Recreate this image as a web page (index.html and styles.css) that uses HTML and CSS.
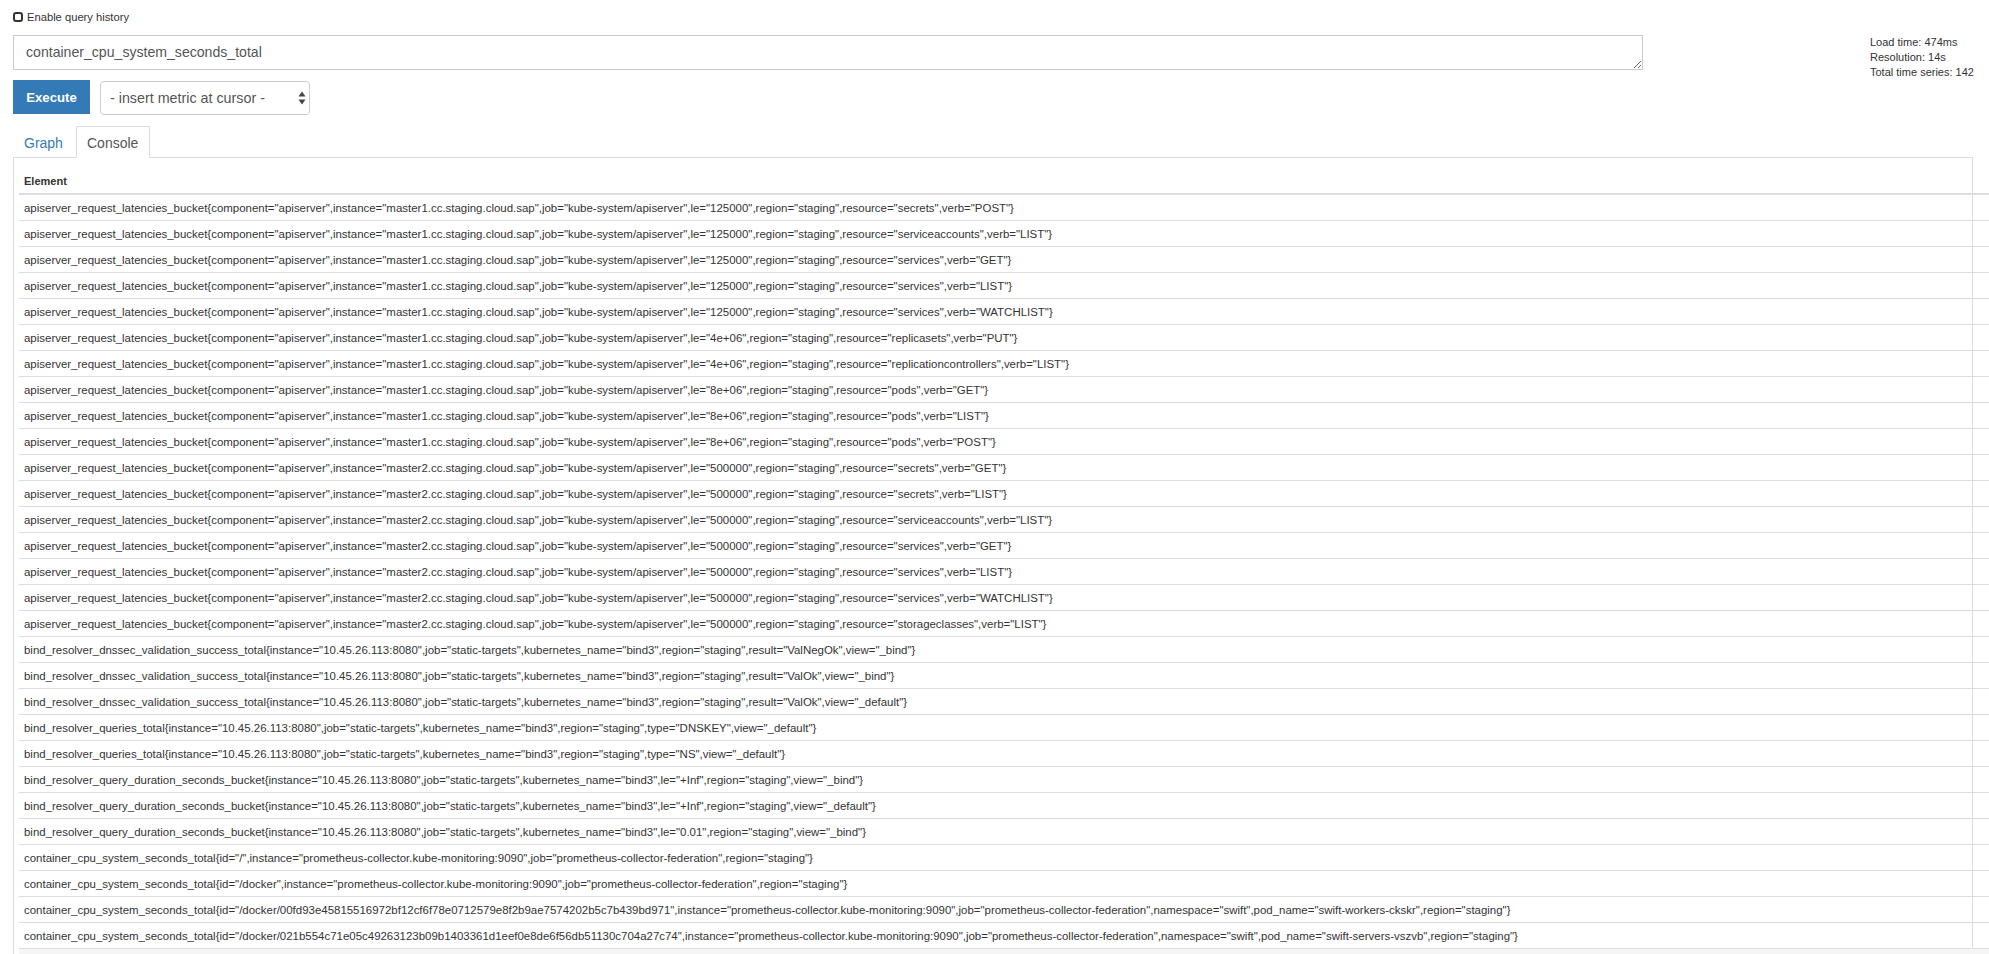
FILE: index.html
```html
<!DOCTYPE html>
<html lang="en">
<head>
<meta charset="utf-8">
<title>Prometheus Time Series Collection and Processing Server</title>
<link rel="stylesheet" href="styles.css">
</head>
<body>
<div class="page">
  <label class="history"><input type="checkbox" class="check"><span>Enable query history</span></label>
  <div class="query-row">
    <textarea class="expr" rows="1" spellcheck="false">container_cpu_system_seconds_total</textarea>
    <div class="stats">
      <div>Load time: 474ms</div>
      <div>Resolution: 14s</div>
      <div>Total time series: 142</div>
    </div>
  </div>
  <div class="actions">
    <button class="execute" type="button">Execute</button>
    <div class="metric-select">
      <span>- insert metric at cursor -</span>
      <svg class="updown" width="8" height="14" viewBox="0 0 8 14"><path d="M4 0.5 L7.5 5.5 H0.5 Z M4 13.5 L0.5 8.5 H7.5 Z" fill="#444"/></svg>
    </div>
  </div>
  <ul class="tabs">
    <li><a class="tab" href="#">Graph</a></li>
    <li><a class="tab active" href="#">Console</a></li>
  </ul>
  <div class="tab-content">
    <table class="console">
      <thead><tr><th>Element</th></tr></thead>
      <tbody>
        <tr><td>apiserver_request_latencies_bucket{component="apiserver",instance="master1.cc.staging.cloud.sap",job="kube-system/apiserver",le="125000",region="staging",resource="secrets",verb="POST"}</td></tr>
        <tr><td>apiserver_request_latencies_bucket{component="apiserver",instance="master1.cc.staging.cloud.sap",job="kube-system/apiserver",le="125000",region="staging",resource="serviceaccounts",verb="LIST"}</td></tr>
        <tr><td>apiserver_request_latencies_bucket{component="apiserver",instance="master1.cc.staging.cloud.sap",job="kube-system/apiserver",le="125000",region="staging",resource="services",verb="GET"}</td></tr>
        <tr><td>apiserver_request_latencies_bucket{component="apiserver",instance="master1.cc.staging.cloud.sap",job="kube-system/apiserver",le="125000",region="staging",resource="services",verb="LIST"}</td></tr>
        <tr><td>apiserver_request_latencies_bucket{component="apiserver",instance="master1.cc.staging.cloud.sap",job="kube-system/apiserver",le="125000",region="staging",resource="services",verb="WATCHLIST"}</td></tr>
        <tr><td>apiserver_request_latencies_bucket{component="apiserver",instance="master1.cc.staging.cloud.sap",job="kube-system/apiserver",le="4e+06",region="staging",resource="replicasets",verb="PUT"}</td></tr>
        <tr><td>apiserver_request_latencies_bucket{component="apiserver",instance="master1.cc.staging.cloud.sap",job="kube-system/apiserver",le="4e+06",region="staging",resource="replicationcontrollers",verb="LIST"}</td></tr>
        <tr><td>apiserver_request_latencies_bucket{component="apiserver",instance="master1.cc.staging.cloud.sap",job="kube-system/apiserver",le="8e+06",region="staging",resource="pods",verb="GET"}</td></tr>
        <tr><td>apiserver_request_latencies_bucket{component="apiserver",instance="master1.cc.staging.cloud.sap",job="kube-system/apiserver",le="8e+06",region="staging",resource="pods",verb="LIST"}</td></tr>
        <tr><td>apiserver_request_latencies_bucket{component="apiserver",instance="master1.cc.staging.cloud.sap",job="kube-system/apiserver",le="8e+06",region="staging",resource="pods",verb="POST"}</td></tr>
        <tr><td>apiserver_request_latencies_bucket{component="apiserver",instance="master2.cc.staging.cloud.sap",job="kube-system/apiserver",le="500000",region="staging",resource="secrets",verb="GET"}</td></tr>
        <tr><td>apiserver_request_latencies_bucket{component="apiserver",instance="master2.cc.staging.cloud.sap",job="kube-system/apiserver",le="500000",region="staging",resource="secrets",verb="LIST"}</td></tr>
        <tr><td>apiserver_request_latencies_bucket{component="apiserver",instance="master2.cc.staging.cloud.sap",job="kube-system/apiserver",le="500000",region="staging",resource="serviceaccounts",verb="LIST"}</td></tr>
        <tr><td>apiserver_request_latencies_bucket{component="apiserver",instance="master2.cc.staging.cloud.sap",job="kube-system/apiserver",le="500000",region="staging",resource="services",verb="GET"}</td></tr>
        <tr><td>apiserver_request_latencies_bucket{component="apiserver",instance="master2.cc.staging.cloud.sap",job="kube-system/apiserver",le="500000",region="staging",resource="services",verb="LIST"}</td></tr>
        <tr><td>apiserver_request_latencies_bucket{component="apiserver",instance="master2.cc.staging.cloud.sap",job="kube-system/apiserver",le="500000",region="staging",resource="services",verb="WATCHLIST"}</td></tr>
        <tr><td>apiserver_request_latencies_bucket{component="apiserver",instance="master2.cc.staging.cloud.sap",job="kube-system/apiserver",le="500000",region="staging",resource="storageclasses",verb="LIST"}</td></tr>
        <tr><td>bind_resolver_dnssec_validation_success_total{instance="10.45.26.113:8080",job="static-targets",kubernetes_name="bind3",region="staging",result="ValNegOk",view="_bind"}</td></tr>
        <tr><td>bind_resolver_dnssec_validation_success_total{instance="10.45.26.113:8080",job="static-targets",kubernetes_name="bind3",region="staging",result="ValOk",view="_bind"}</td></tr>
        <tr><td>bind_resolver_dnssec_validation_success_total{instance="10.45.26.113:8080",job="static-targets",kubernetes_name="bind3",region="staging",result="ValOk",view="_default"}</td></tr>
        <tr><td>bind_resolver_queries_total{instance="10.45.26.113:8080",job="static-targets",kubernetes_name="bind3",region="staging",type="DNSKEY",view="_default"}</td></tr>
        <tr><td>bind_resolver_queries_total{instance="10.45.26.113:8080",job="static-targets",kubernetes_name="bind3",region="staging",type="NS",view="_default"}</td></tr>
        <tr><td>bind_resolver_query_duration_seconds_bucket{instance="10.45.26.113:8080",job="static-targets",kubernetes_name="bind3",le="+Inf",region="staging",view="_bind"}</td></tr>
        <tr><td>bind_resolver_query_duration_seconds_bucket{instance="10.45.26.113:8080",job="static-targets",kubernetes_name="bind3",le="+Inf",region="staging",view="_default"}</td></tr>
        <tr><td>bind_resolver_query_duration_seconds_bucket{instance="10.45.26.113:8080",job="static-targets",kubernetes_name="bind3",le="0.01",region="staging",view="_bind"}</td></tr>
        <tr><td>container_cpu_system_seconds_total{id="/",instance="prometheus-collector.kube-monitoring:9090",job="prometheus-collector-federation",region="staging"}</td></tr>
        <tr><td>container_cpu_system_seconds_total{id="/docker",instance="prometheus-collector.kube-monitoring:9090",job="prometheus-collector-federation",region="staging"}</td></tr>
        <tr><td>container_cpu_system_seconds_total{id="/docker/00fd93e45815516972bf12cf6f78e0712579e8f2b9ae7574202b5c7b439bd971",instance="prometheus-collector.kube-monitoring:9090",job="prometheus-collector-federation",namespace="swift",pod_name="swift-workers-ckskr",region="staging"}</td></tr>
        <tr><td>container_cpu_system_seconds_total{id="/docker/021b554c71e05c49263123b09b1403361d1eef0e8de6f56db51130c704a27c74",instance="prometheus-collector.kube-monitoring:9090",job="prometheus-collector-federation",namespace="swift",pod_name="swift-servers-vszvb",region="staging"}</td></tr>
        <tr class="hover"><td>&nbsp;</td></tr>
      </tbody>
    </table>
  </div>
</div>
</body>
</html>
```
FILE: styles.css
```css
* { box-sizing: border-box; }
html, body { margin: 0; padding: 0; height: 100%; overflow: hidden; background: #fff; }
body { font-family: "Liberation Sans", Arial, sans-serif; color: #333; font-size: 12px; }
.page { padding: 0 16px 0 13px; }
.history { display: flex; align-items: center; height: 33px; font-size: 11.2px; gap: 4px; margin-bottom: 2px; }
.check { appearance: none; margin: 0; width: 10px; height: 10px; border: 2px solid #333; border-radius: 3px; background: #fff; }
.query-row { display: flex; height: 35px; }
.expr { width: 1630px; height: 35px; border: 1px solid #ccc; border-radius: 0; padding: 6px 12px; font: 14.1px/20px "Liberation Sans", Arial, sans-serif; color: #555; outline: none; flex: none; resize: both; }
.stats { margin-left: 227px; font-size: 11px; line-height: 15px; color: #333; white-space: nowrap; }
.actions { display: flex; align-items: flex-start; margin-top: 10px; gap: 10px; }
.execute { width: 77px; height: 34px; border: 0; padding: 0; background: #337ab7; color: #fff; font: bold 13.2px "Liberation Sans", Arial, sans-serif; }
.metric-select { width: 210px; height: 34px; margin-top: 1px; display: flex; align-items: center; justify-content: space-between; padding: 0 3px 0 9px; border: 1px solid #ccc; border-radius: 4px; font-size: 14.3px; color: #555; }
.tabs { display: flex; list-style: none; margin: 11px 0 0; padding: 0; height: 32px; }
.tab { display: block; width: 63px; height: 32px; padding: 6px 10px 0; font-size: 14px; line-height: 20px; color: #337ab7; text-decoration: none; border: 1px solid transparent; border-bottom: 0; }
.tab.active { width: 74px; color: #555; background: #fff; border-color: #ddd; }
.tab-content { border: 1px solid #ddd; margin-top: -1px; padding: 5px; height: 900px; }
.console { border-collapse: separate; border-spacing: 0; width: 1971px; table-layout: fixed; }
.console th { text-align: left; font-size: 11px; font-weight: bold; height: 32px; padding: 6px 5px 0; border-bottom: 2px solid #ddd; }
.console td { height: 26px; padding: 1px 5px 0; font-size: 11.46px; border-bottom: 1px solid #ddd; white-space: nowrap; }
.console tr.hover td { background: #f5f5f5; }
```
